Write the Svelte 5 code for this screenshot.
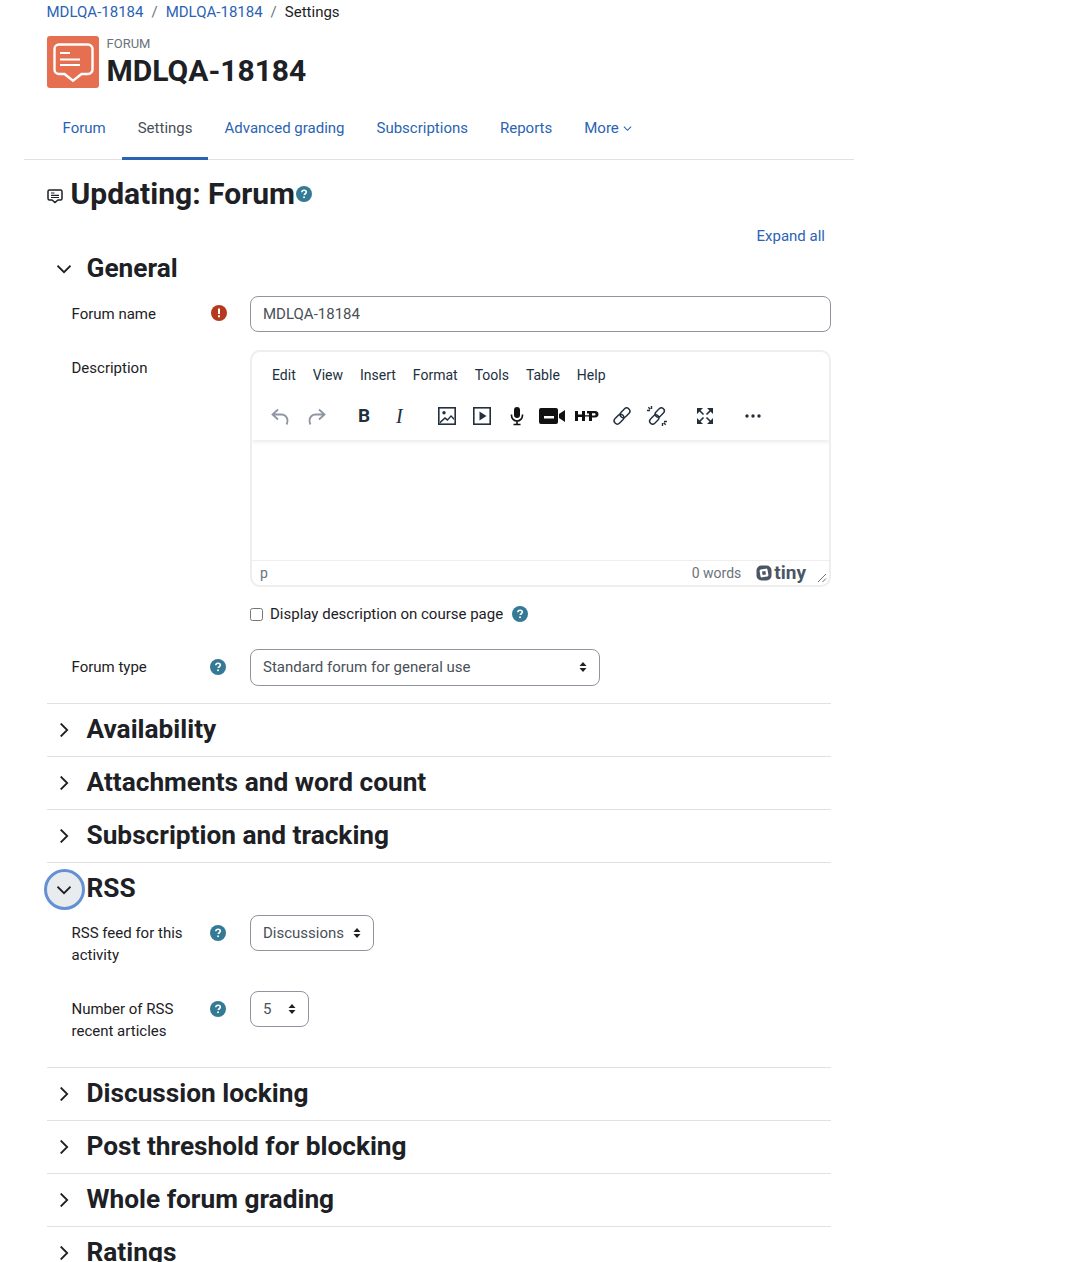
<script>
	const tabs = ['Forum', 'Settings', 'Advanced grading', 'Subscriptions', 'Reports'];
	const menus = ['Edit', 'View', 'Insert', 'Format', 'Tools', 'Table', 'Help'];
	const before = ['Availability', 'Attachments and word count', 'Subscription and tracking'];
	const after = ['Discussion locking', 'Post threshold for blocking', 'Whole forum grading', 'Ratings'];
</script>

{#snippet help()}
	<svg class="help" viewBox="0 0 16 16" width="16" height="16">
		<circle cx="8" cy="8" r="8" fill="#357a95" />
		<path d="M5.800 6.300c0-1.300 1-2.100 2.300-2.100s2.200.8 2.200 1.900c0 1.700-2 1.600-2 3" fill="none" stroke="#fff" stroke-width="1.600" />
		<rect x="7.200" y="10.400" width="1.700" height="1.700" fill="#fff" />
	</svg>
{/snippet}

{#snippet chevronRight()}
	<svg class="chev" viewBox="0 0 14 14" width="14" height="14">
		<path d="M3.700 .5 10.200 7l-6.500 6.500" fill="none" stroke="#1d2125" stroke-width="1.800" />
	</svg>
{/snippet}

{#snippet chevronDown()}
	<svg class="chev" viewBox="0 0 14 14" width="14" height="14">
		<path d="M.5 3.700 7 10.200l6.500-6.500" fill="none" stroke="#1d2125" stroke-width="1.800" />
	</svg>
{/snippet}

{#snippet updown()}
	<svg class="updown" viewBox="0 0 8 12" width="8" height="12">
		<path d="M4 1 7.500 5h-7zM4 11 .5 7h7z" fill="#1d2125" />
	</svg>
{/snippet}

{#snippet section(title)}
	<div class="section">
		<span class="toggle">{@render chevronRight()}</span>
		<h3>{title}</h3>
	</div>
{/snippet}

<div class="page">
	<nav class="crumbs">
		<a href="#a">MDLQA-18184</a><span class="sep">/</span>
		<a href="#b">MDLQA-18184</a><span class="sep">/</span>
		<span>Settings</span>
	</nav>

	<header class="head">
		<div class="modicon">
			<svg viewBox="0 0 52 52" width="52" height="52">
				<path d="M12 8.500h29a4.500 4.500 0 0 1 4.500 4.500v20.500a4.500 4.500 0 0 1-4.500 4.500h-6.500L26 44.800 17.500 38H12a4.500 4.500 0 0 1-4.500-4.500V13A4.500 4.500 0 0 1 12 8.500z" fill="none" stroke="#fff" stroke-width="2.400" />
				<path d="M13 17h10M13 23.500h20M13 29h20" stroke="#fff" stroke-width="2.200" fill="none" />
			</svg>
		</div>
		<div>
			<div class="kicker">FORUM</div>
			<h1>MDLQA-18184</h1>
		</div>
	</header>

	<ul class="tabs">
		{#each tabs as tab}
			<li class:active={tab === 'Settings'}>{tab}</li>
		{/each}
		<li>More <svg viewBox="0 0 10 10" width="9" height="9"><path d="M1 3l4 4 4-4" fill="none" stroke="#2b63b3" stroke-width="1.200" /></svg></li>
	</ul>

	<main class="content">
		<div class="title">
			<svg class="smallicon" viewBox="0 0 16 16" width="16" height="16">
				<path d="M2.500 2h11A1.500 1.500 0 0 1 15 3.500v7a1.500 1.500 0 0 1-1.500 1.500H11l-3 2.500L5 12H2.500A1.500 1.500 0 0 1 1 10.500v-7A1.500 1.500 0 0 1 2.500 2z" fill="none" stroke="#1d2125" stroke-width="1.500" />
				<path d="M4 5h3.500M4 7.300h8M4 9.500h8" stroke="#1d2125" stroke-width="1.200" />
			</svg>
			<h2>Updating: Forum</h2>
			{@render help()}
		</div>

		<div class="expand"><a href="#c">Expand all</a></div>

		<div class="open-head">
			<span class="toggle">{@render chevronDown()}</span>
			<h3>General</h3>
		</div>

		<div class="row name-row">
			<label class="label" for="name">Forum name</label>
			<span class="mark">
				<svg viewBox="0 0 16 16" width="16" height="16">
					<circle cx="8" cy="8" r="8" fill="#b5391f" />
					<rect x="7" y="3.500" width="2" height="5.500" fill="#fff" />
					<rect x="7" y="10.300" width="2" height="2" fill="#fff" />
				</svg>
			</span>
			<input id="name" class="field wide" value="MDLQA-18184" />
		</div>

		<div class="row desc-row">
			<span class="label">Description</span>
			<span class="mark"></span>
			<div class="editor">
				<div class="toolbar">
					<div class="menus">
						{#each menus as menu}<span>{menu}</span>{/each}
					</div>
					<div class="tools">
						<svg class="undo" viewBox="0 0 20 20" width="20" height="20"><path d="M8 2.500 2.500 7.500 8 12.500M3 7.500h8.500a6 6 0 0 1 6 6c0 1.500-.5 3-1 4" fill="none" stroke="#8f96a1" stroke-width="1.800" /></svg>
						<svg class="redo" viewBox="0 0 20 20" width="20" height="20"><path d="M12 2.500l5.500 5L12 12.500M17 7.500H8.500a6 6 0 0 0-6 6c0 1.500.5 3 1 4" fill="none" stroke="#8f96a1" stroke-width="1.800" /></svg>
						<b class="bold">B</b>
						<i class="ital">I</i>
						<svg class="img" viewBox="0 0 20 20" width="20" height="20"><rect x="1.800" y="1.800" width="16.400" height="16.400" fill="none" stroke="#222f3e" stroke-width="1.600" /><circle cx="7" cy="6.800" r="1.700" fill="#222f3e" /><path d="M3 15.500l5-4.500 2.500 2 3.500-4 3 3v2l-3-3-3.500 4-2.500-2L3 17.500z" fill="#222f3e" /></svg>
						<svg class="vid" viewBox="0 0 20 20" width="20" height="20"><rect x="1.800" y="1.800" width="16.400" height="16.400" fill="none" stroke="#222f3e" stroke-width="1.600" /><path d="M7.500 5.500 14.500 10l-7 4.500z" fill="#222f3e" /></svg>
						<svg class="mic" viewBox="0 0 16 20" width="16" height="20"><rect x="5" y="1" width="6" height="11" rx="3" fill="#111" /><path d="M2.500 8.500v1a5.500 5.500 0 0 0 11 0v-1M8 15v3M4.500 18.500h7" fill="none" stroke="#111" stroke-width="1.600" /></svg>
						<svg class="cam" viewBox="0 0 26 16" width="26" height="16"><path d="M2 0h15a2 2 0 0 1 2 2v12a2 2 0 0 1-2 2H2a2 2 0 0 1-2-2V2a2 2 0 0 1 2-2zM5 8v2.500h10V8zM20 6l6-4v12l-6-4z" fill="#111" fill-rule="evenodd" /></svg>
						<svg class="h5p" viewBox="0 0 24 10" width="24" height="10"><path d="M0 0h3v3.500h4V0h3v10H7V6H3v4H0zM10 4.200h4v1.300h-4zM12 0h8c2.500 0 3.500 1.300 3.500 3.200S22.500 6.500 20 6.500h-3V10h-3V2.500h-2zM17 2.300v2.200h2.500c.7 0 1-.4 1-1.100s-.3-1.100-1-1.100z" fill="#111" fill-rule="evenodd" /></svg>
						<svg class="link" viewBox="0 0 20 20" width="20" height="20"><g fill="none" stroke="#222f3e" stroke-width="1.500"><rect x="1.500" y="10" width="11" height="6.400" rx="3.200" transform="rotate(-45 7 13.200)" /><rect x="7.500" y="3.600" width="11" height="6.400" rx="3.200" transform="rotate(-45 13 6.800)" /></g></svg>
						<svg class="unlink" viewBox="0 0 22 22" width="22" height="22"><g fill="none" stroke="#222f3e" stroke-width="1.400"><rect x="3" y="11.500" width="10.500" height="6" rx="3" transform="rotate(-45 8.300 14.500)" /><rect x="8.500" y="4.500" width="10.500" height="6" rx="3" transform="rotate(-45 13.700 7.500)" /><path d="M5.500 1v3M1 5.500h3M2.300 2.300l2 2M16.500 21v-3M21 16.500h-3M19.700 19.700l-2-2" /></g></svg>
						<svg class="full" viewBox="0 0 16 16" width="16" height="16"><path d="M0 0h6L0 6zM16 0v6l-6-6zM0 16v-6l6 6zM16 16h-6l6-6z" fill="#222f3e" /><path d="M2 2l4.500 4.500M14 2 9.500 6.500M2 14l4.500-4.500M14 14 9.500 9.500" stroke="#222f3e" stroke-width="1.600" /></svg>
						<svg class="dots" viewBox="0 0 16 4" width="16" height="4"><circle cx="2" cy="2" r="1.700" fill="#222f3e" /><circle cx="8" cy="2" r="1.700" fill="#222f3e" /><circle cx="14" cy="2" r="1.700" fill="#222f3e" /></svg>
					</div>
				</div>
				<div class="area"></div>
				<div class="status">
					<span class="path">p</span>
					<span class="words">0 words</span>
					<span class="tiny">
						<svg viewBox="0 0 16 16" width="16" height="16"><rect x=".5" y=".5" width="15" height="15" rx="5" fill="#4b5563" /><rect x="4" y="4" width="8" height="8" rx="1.500" fill="#fff" transform="rotate(-10 8 8)" /><rect x="6.300" y="6.300" width="3.400" height="3.400" fill="#4b5563" transform="rotate(-10 8 8)" /></svg>
						<span>tiny</span>
					</span>
					<svg class="grip" viewBox="0 0 10 10" width="10" height="10"><path d="M1 9 9 1M5.500 9 9 5.500" stroke="#6b7280" stroke-width="1" /></svg>
				</div>
			</div>
		</div>

		<div class="check-row">
			<input type="checkbox" id="show" />
			<label for="show">Display description on course page</label>
			{@render help()}
		</div>

		<div class="row type-row">
			<span class="label">Forum type</span>
			<span class="mark">{@render help()}</span>
			<div class="field select type">Standard forum for general use {@render updown()}</div>
		</div>

		{#each before as title}
			{@render section(title)}
		{/each}

		<div class="section rss">
			<span class="toggle focused">{@render chevronDown()}</span>
			<h3>RSS</h3>
		</div>

		<div class="row rss-row">
			<span class="label">RSS feed for this activity</span>
			<span class="mark">{@render help()}</span>
			<div class="field select">Discussions {@render updown()}</div>
		</div>

		<div class="row rss-row">
			<span class="label">Number of RSS recent articles</span>
			<span class="mark">{@render help()}</span>
			<div class="field select five">5 {@render updown()}</div>
		</div>

		{#each after as title}
			{@render section(title)}
		{/each}
	</main>
</div>

<style>
	:global(body) {
		background: #fff;
	}

	.page {
		width: 830px;
		height: 1262px;
		overflow: hidden;
		margin-left: 24px;
		font-family: Roboto, sans-serif;
		font-size: 15px;
		line-height: 22px;
		color: #1d2125;
	}

	a {
		color: #2b63b3;
		text-decoration: none;
	}

	.crumbs {
		height: 24px;
		padding-left: 22.5px;
		display: flex;
		align-items: center;
	}

	.sep {
		margin: 0 8px;
		color: #6a737b;
	}

	.head {
		display: flex;
		gap: 7.5px;
		margin: 12px 0 0 23px;
		height: 52px;
	}

	.modicon {
		width: 52px;
		height: 52px;
		background: #e56f50;
		border-radius: 3px;
	}

	.modicon svg {
		display: block;
	}

	.kicker {
		font-size: 13px;
		line-height: 16px;
		color: #6a737b;
	}

	h1 {
		margin: 0;
		font-size: 30px;
		line-height: 38px;
		font-weight: 700;
	}

	.tabs {
		list-style: none;
		display: flex;
		margin: 20px 0 0;
		padding: 0 0 0 22.5px;
		height: 51px;
		border-bottom: 1px solid #dee2e6;
	}

	.tabs li {
		padding: 0 16px;
		height: 52px;
		line-height: 40px;
		color: #2b63b3;
		box-sizing: border-box;
	}

	.tabs li.active {
		color: #495057;
		border-bottom: 3px solid #2b63b3;
	}

	.content {
		padding: 0 23px;
	}

	.title {
		display: flex;
		align-items: center;
		margin-top: 14px;
		height: 40px;
	}

	.smallicon {
		margin: 3px 7.5px 0 0;
	}

	h2 {
		margin: 0 1.5px 0 0;
		font-size: 30px;
		line-height: 40px;
		font-weight: 700;
	}

	.help {
		display: block;
		flex: none;
	}

	.expand {
		text-align: right;
		padding-right: 6px;
		margin-top: 11px;
		height: 22px;
	}

	.open-head,
	.section {
		display: flex;
		align-items: center;
		gap: 3.5px;
	}

	.open-head {
		height: 44px;
	}

	.section {
		height: 52px;
		border-top: 1px solid #dee2e6;
	}

	.section.rss {
		gap: 1.5px;
	}

	.toggle {
		width: 36px;
		height: 36px;
		flex: none;
		display: flex;
		align-items: center;
		justify-content: center;
		border-radius: 50%;
		box-sizing: border-box;
	}

	.toggle .chev {
		margin-left: -2px;
	}

	.toggle.focused {
		width: 41px;
		height: 41px;
		margin-left: -3px;
		background: #e9ecef;
		border: 3px solid #6490d4;
	}

	.toggle.focused .chev {
		margin: 2px 0 0 -1px;
	}

	.chev {
		display: block;
	}

	h3 {
		margin: 0 0 2px;
		font-size: 26.25px;
		line-height: 36px;
		font-weight: 700;
	}

	.row {
		display: flex;
		align-items: flex-start;
	}

	.label {
		width: 139px;
		margin-left: 24.5px;
		padding-right: 0.5px;
		flex: none;
	}

	.mark {
		width: 39px;
		flex: none;
		height: 22px;
		display: flex;
		align-items: center;
	}

	.mark svg {
		display: block;
	}

	.mark .help {
		margin-left: -1px;
	}

	.name-row {
		margin-top: 5px;
		height: 36px;
		align-items: center;
	}

	.name-row .mark {
		margin-top: -2px;
	}

	.field {
		box-sizing: border-box;
		height: 36px;
		border: 1px solid #8f959e;
		border-radius: 8px;
		padding: 0 12px;
		color: #495057;
		font: inherit;
		background: #fff;
		outline: none;
	}

	.wide {
		width: 581px;
	}

	.select {
		display: flex;
		align-items: center;
		gap: 9px;
	}

	.updown {
		display: block;
		flex: none;
	}

	.type {
		width: 350px;
		height: 37px;
		justify-content: space-between;
		padding: 0 12px 1px;
	}

	.five {
		width: 59px;
		justify-content: space-between;
		padding-right: 12px;
	}

	.desc-row {
		margin-top: 18px;
		height: 237px;
	}

	.desc-row .label {
		margin-top: 7px;
	}

	.editor {
		box-sizing: border-box;
		width: 581px;
		height: 237px;
		border: 2px solid #eeeeee;
		border-radius: 10px;
		display: flex;
		flex-direction: column;
		overflow: hidden;
	}

	.toolbar {
		height: 88px;
		flex: none;
		box-shadow: 0 2px 4px rgba(34, 47, 62, 0.1);
		position: relative;
		color: #222f3e;
		font-size: 14px;
	}

	.menus {
		display: flex;
		gap: 17px;
		padding: 12px 0 0 20px;
		height: 30px;
	}

	.tools {
		position: relative;
		height: 40px;
		margin-top: -1px;
	}

	.tools > * {
		position: absolute;
	}

	.undo { left: 18px; top: 14px; }
	.redo { left: 55px; top: 14px; }
	.bold { left: 106px; top: 12px; font-size: 19px; }
	.ital { left: 144px; top: 12px; font-family: "Liberation Serif", serif; font-size: 20px; }
	.img { left: 185px; top: 13px; }
	.vid { left: 220px; top: 13px; }
	.mic { left: 257px; top: 13px; }
	.cam { left: 287px; top: 15px; }
	.h5p { left: 323px; top: 18px; }
	.link { left: 360px; top: 13px; }
	.unlink { left: 394px; top: 12px; }
	.full { left: 445px; top: 15px; }
	.dots { left: 493px; top: 21px; }

	.area {
		flex: 1;
	}

	.status {
		height: 24px;
		flex: none;
		border-top: 1px solid #eeeeee;
		display: flex;
		align-items: center;
		font-size: 14px;
		color: #6a737b;
		padding: 0 3px 0 8px;
		position: relative;
	}

	.path {
		flex: 1;
	}

	.tiny {
		display: flex;
		align-items: center;
		gap: 2px;
		margin: 0 20px 0 15px;
		color: #4b5563;
		font-weight: 700;
		font-size: 19px;
	}

	.tiny svg {
		display: block;
	}

	.grip {
		position: absolute;
		right: 2px;
		bottom: 2px;
	}

	.check-row {
		display: flex;
		align-items: center;
		margin: 16px 0 0 203px;
		height: 22px;
	}

	.check-row input {
		width: 13px;
		height: 13px;
		margin: 0 7px 0 0;
	}

	.check-row label {
		margin-right: 9px;
	}

	.type-row {
		margin-top: 24px;
		height: 54px;
	}

	.type-row .label,
	.type-row .mark {
		margin-top: 7px;
	}

	.rss-row {
		height: 76px;
	}

	.rss-row .label,
	.rss-row .mark {
		margin-top: 7px;
	}
</style>
